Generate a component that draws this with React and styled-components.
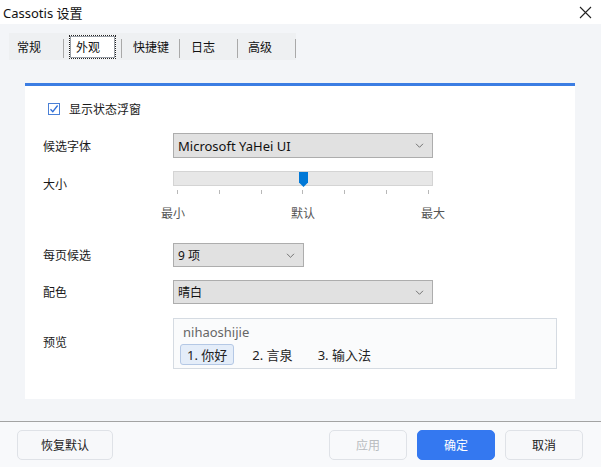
import React from "react";
import styled, { createGlobalStyle } from "styled-components";

const Global = createGlobalStyle`
  html, body { margin: 0; padding: 0; background: #f3f5f8; }
  body { font-family: "Noto Sans", "Noto Sans CJK SC", sans-serif; color: #1a1a1a; }
  * { box-sizing: border-box; }
`;

const Window = styled.div`
  width: 601px;
  height: 467px;
  display: flex;
  flex-direction: column;
  background: #f3f5f8;
  overflow: hidden;
`;

const TitleBar = styled.div`
  height: 24px;
  background: #fff;
  display: flex;
  align-items: center;
  justify-content: space-between;
  padding: 0 9px 0 3px;
  font-size: 13px;
  color: #111;
`;

const Body = styled.div`
  flex: 1;
  display: flex;
  flex-direction: column;
  padding: 9px 0 0 0;
`;

const TabBar = styled.div`
  display: flex;
  height: 27px;
  margin-left: 9px;
`;

const Tab = styled.div`
  position: relative;
  width: ${({ $w }) => $w}px;
  height: 27px;
  background: #eef0f2;
  display: flex;
  align-items: center;
  padding-left: ${({ $pad }) => $pad}px;
  font-size: 12px;
  color: #111;
  &::after {
    content: "";
    position: absolute;
    right: 0;
    top: 6px;
    bottom: 2px;
    width: 1px;
    background: #a9a9a9;
  }
`;

const FocusBox = styled.span`
  display: flex;
  align-items: center;
  height: 24px;
  margin-top: 1px;
  width: 47px;
  padding-left: 6px;
  background: #fff;
  border: 1px dotted #222;
  outline: 1px solid #9aa0a8;
  outline-offset: -2px;
`;

const Panel = styled.div`
  margin: 23px 26px 0 25px;
  height: 316px;
  background: #fff;
  border-top: 3px solid #3b7de3;
  padding: 0 0 0 18px;
  display: flex;
  flex-direction: column;
`;

const Row = styled.div`
  display: flex;
  align-items: ${({ $align }) => $align || "center"};
  height: ${({ $h }) => $h}px;
  margin-top: ${({ $mt }) => $mt}px;
  font-size: 12px;
`;

const Label = styled.div`
  width: 130px;
  flex-shrink: 0;
  color: #1a1a1a;
`;

const CheckRow = styled.label`
  display: flex;
  align-items: center;
  gap: 9px;
  margin-left: 5px;
  font-size: 12px;
`;

const Check = styled.span`
  width: 12px;
  height: 12px;
  border: 1px solid #4a80d6;
  background: #fff;
  display: flex;
  align-items: center;
  justify-content: center;
`;

const Select = styled.div`
  width: ${({ $w }) => $w}px;
  height: ${({ $h }) => $h || 24}px;
  background: #e1e1e1;
  border: 1px solid #adadad;
  display: flex;
  align-items: center;
  justify-content: space-between;
  padding: 0 8px 0 4px;
  font-size: ${({ $fs }) => $fs || 12}px;
  color: #111;
`;

const SliderCol = styled.div`
  width: 260px;
  display: flex;
  flex-direction: column;
  align-self: flex-start;
`;

const Track = styled.div`
  position: relative;
  height: 15px;
  background: #e7e7e7;
  border: 1px solid #d4d4d4;
`;

const Thumb = styled.div`
  position: absolute;
  top: 0;
  width: 9px;
  height: 15px;
  background: #0078d7;
  clip-path: polygon(0 0, 100% 0, 100% 70%, 50% 100%, 0 70%);
`;

const Ticks = styled.div`
  display: flex;
  justify-content: space-between;
  padding: 0 4px;
  margin-top: 4px;
`;

const Tick = styled.span`
  width: 1px;
  height: 4px;
  background: #b8b8b8;
`;

const TickLabels = styled.div`
  display: flex;
  justify-content: space-between;
  width: 284px;
  margin-left: 118px;
  font-size: 12px;
  color: #555;
`;

const Preview = styled.div`
  width: 384px;
  height: 51px;
  background: #fafbfc;
  border: 1px solid #d5dbe2;
  padding: 4px 0 0 6px;
  display: flex;
  flex-direction: column;
  gap: 3px;
`;

const Pinyin = styled.div`
  padding-left: 3px;
  font-size: 13px;
  color: #666;
  line-height: 18px;
`;

const Candidates = styled.div`
  display: flex;
  align-items: center;
  gap: 11px;
  font-size: 13px;
  color: #222;
`;

const Candidate = styled.span`
  height: 21px;
  display: flex;
  align-items: center;
  padding: 0 6px;
  border-radius: 3px;
  ${({ $active }) =>
    $active
      ? "background: #e4edf9; border: 1px solid #b4c8e5;"
      : "border: 1px solid transparent;"}
`;

const Footer = styled.div`
  height: 46px;
  margin-top: 22px;
  border-top: 1px solid #a3a3a3;
  background: #f8f9fb;
  display: flex;
  align-items: center;
  padding: 0 18px 0 17px;
  gap: 10px;
`;

const Button = styled.button`
  width: ${({ $w }) => $w || 78}px;
  height: 30px;
  border-radius: 5px;
  font-family: inherit;
  font-size: 12px;
  border: 1px solid ${({ $kind }) => ($kind === "primary" ? "#3478f0" : "#dfe2e7")};
  background: ${({ $kind }) =>
    $kind === "primary" ? "#3478f0" : $kind === "disabled" ? "#f8f9fb" : "#f7f8fa"};
  color: ${({ $kind }) =>
    $kind === "primary" ? "#fff" : $kind === "disabled" ? "#b9bcc0" : "#222"};
  &:first-child { margin-right: auto; }
`;

const Chevron = () => (
  <svg width="9" height="5" viewBox="0 0 9 5">
    <path d="M1 0.8l3.5 3.5 3.5-3.5" fill="none" stroke="#666" strokeWidth="0.9" />
  </svg>
);

export default function App() {
  const ticks = Array.from({ length: 7 });
  return (
    <Window>
      <Global />
      <TitleBar>
        <span>Cassotis 设置</span>
        <svg width="13" height="13" viewBox="0 0 13 13">
          <path d="M1 1l11 11M12 1L1 12" stroke="#222" strokeWidth="1.1" />
        </svg>
      </TitleBar>
      <Body>
        <TabBar>
          <Tab $w={55} $pad={8}>常规</Tab>
          <Tab $w={58} $pad={5}><FocusBox>外观</FocusBox></Tab>
          <Tab $w={58} $pad={11}>快捷键</Tab>
          <Tab $w={58} $pad={11}>日志</Tab>
          <Tab $w={58} $pad={10}>高级</Tab>
        </TabBar>
        <Panel>
          <Row $h={22} $mt={12}>
            <CheckRow>
              <Check>
                <svg width="10" height="10" viewBox="0 0 10 10">
                  <path d="M1.5 5.2l2.3 2.5L8.6 1.5" fill="none" stroke="#2f6fd8" strokeWidth="1.3" />
                </svg>
              </Check>
              显示状态浮窗
            </CheckRow>
          </Row>
          <Row $h={25} $mt={13}>
            <Label>候选字体</Label>
            <Select $w={260} $h={25} $fs={13}>
              Microsoft YaHei UI
              <Chevron />
            </Select>
          </Row>
          <Row $h={26} $mt={13}>
            <Label>大小</Label>
            <SliderCol>
              <Track>
                <Thumb style={{ left: 125 }} />
              </Track>
              <Ticks>
                {ticks.map((_, i) => (
                  <Tick key={i} />
                ))}
              </Ticks>
            </SliderCol>
          </Row>
          <TickLabels style={{ marginTop: 7 }}>
            <span>最小</span>
            <span>默认</span>
            <span>最大</span>
          </TickLabels>
          <Row $h={24} $mt={21}>
            <Label>每页候选</Label>
            <Select $w={131}>
              9 项
              <Chevron />
            </Select>
          </Row>
          <Row $h={24} $mt={13}>
            <Label>配色</Label>
            <Select $w={260}>
              晴白
              <Chevron />
            </Select>
          </Row>
          <Row $h={51} $mt={14}>
            <Label style={{ marginTop: -4 }}>预览</Label>
            <Preview>
              <Pinyin>nihaoshijie</Pinyin>
              <Candidates>
                <Candidate $active>1. 你好</Candidate>
                <Candidate>2. 言泉</Candidate>
                <Candidate>3. 输入法</Candidate>
              </Candidates>
            </Preview>
          </Row>
        </Panel>
        <Footer>
          <Button $w={96}>恢复默认</Button>
          <Button $kind="disabled">应用</Button>
          <Button $kind="primary">确定</Button>
          <Button>取消</Button>
        </Footer>
      </Body>
    </Window>
  );
}
